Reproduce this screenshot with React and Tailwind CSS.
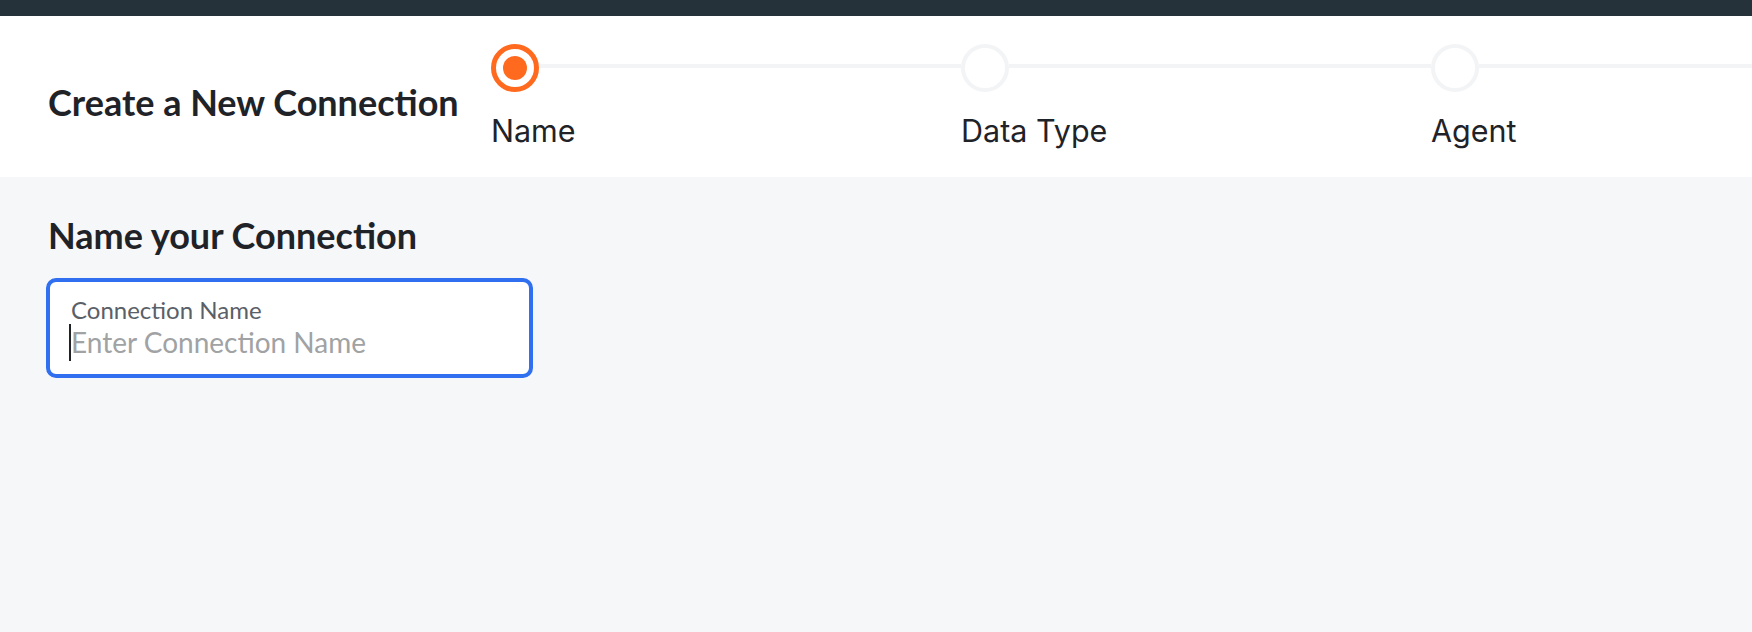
import React from 'react'

const steps = ["Name", "Data Type", "Agent"];

const StepDot = ({ active }) =>
  active ? (
    <div className="w-12 h-12 shrink-0 rounded-full border-[5px] border-[#ff6a1f] bg-white flex items-center justify-center">
      <div className="w-[24px] h-[24px] rounded-full bg-[#ff6a1f]" />
    </div>
  ) : (
    <div className="w-12 h-12 shrink-0 rounded-full border-[4px] border-[#f3f4f6] bg-white" />
  );

const App = () => {
  return (
    <div className="min-h-screen w-full bg-[#f6f7f9] flex flex-col" style={{ fontFamily: "Lato, 'Noto Sans', sans-serif" }}>
      {/* top bar */}
      <div className="h-4 bg-[#25323a]" />

      {/* header with stepper */}
      <div className="h-[161px] bg-white flex items-center pl-12 overflow-hidden">
        <h1 className="w-[443px] shrink-0 mt-[11px] text-[36px] leading-10 font-bold text-[#1f2328]">
          Create a New Connection
        </h1>
        <div className="flex-1 flex overflow-hidden">
          {steps.map((s, i) => (
            <div key={s} className="w-[470px] shrink-0 flex flex-col">
              <div className="flex items-center">
                <StepDot active={i === 0} />
                <div className="flex-1 h-[4px] mb-[5px] bg-[#f3f4f6]" />
              </div>
              <span
                className="mt-[21px] text-[30.5px] leading-9 text-[#1f2328]"
                style={{ fontFamily: "Inter, 'Noto Sans', sans-serif" }}
              >
                {s}
              </span>
            </div>
          ))}
        </div>
      </div>

      {/* body */}
      <div className="flex-1 px-12 pt-[38px]">
        <h2 className="text-[36px] leading-10 font-bold text-[#1f2328]">Name your Connection</h2>
        <div className="relative mt-[23px] -ml-[2px] w-[487px] h-[100px] bg-white border-[4px] border-[#2f6ff0] rounded-[10px] pl-[21px] pt-[14px] flex flex-col">
          <label className="text-[24px] leading-7 text-[#5a6067]">Connection Name</label>
          <div className="relative -mt-[1px]">
            <span className="absolute -left-[2px] top-[1px] w-[2px] h-[37px] bg-[#1f2328]" />
            <input
              className="w-full bg-transparent outline-none text-[28px] leading-[38px] text-[#1f2328] placeholder:text-[#a0a2a4]"
              placeholder="Enter Connection Name"
            />
          </div>
        </div>
      </div>
    </div>
  );
};

export default App
